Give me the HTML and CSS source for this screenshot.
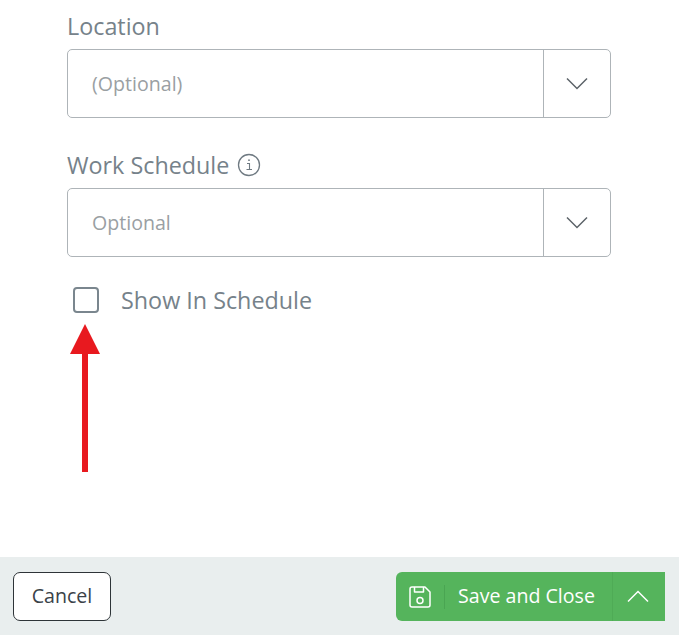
FILE: index.html
```html
<!DOCTYPE html>
<html lang="en">
  <head>
    <meta charset="UTF-8" />
    <meta name="viewport" content="width=device-width, initial-scale=1.0" />
    <title>Show In Schedule</title>
    <link rel="stylesheet" href="styles.css">
  </head>
  <body>
    <div class="form">
      <div class="field">
        <div class="field-label">Location</div>
        <div class="select">
          <div class="select-value">(Optional)</div>
          <div class="select-toggle">
            <svg width="22" height="13" viewBox="0 0 22 13"><path d="M1 1.5l10 10 10-10" fill="none" stroke="#5c6368" stroke-width="1.5"/></svg>
          </div>
        </div>
      </div>

      <div class="field field-schedule">
        <div class="field-label">
          Work Schedule
          <svg class="info-icon" width="24" height="24" viewBox="0 0 24 24">
            <circle cx="12" cy="12" r="10.5" fill="none" stroke="#6f7a82" stroke-width="1.3"/>
            <path d="M10 10.5h2.5v6M9.5 16.5h5.5" fill="none" stroke="#6f7a82" stroke-width="1.1"/>
            <circle cx="12" cy="7.2" r="0.9" fill="#6f7a82"/>
          </svg>
        </div>
        <div class="select">
          <div class="select-value">Optional</div>
          <div class="select-toggle">
            <svg width="22" height="13" viewBox="0 0 22 13"><path d="M1 1.5l10 10 10-10" fill="none" stroke="#5c6368" stroke-width="1.5"/></svg>
          </div>
        </div>
      </div>

      <label class="check-row">
        <span class="checkbox"></span>
        <span class="check-label">Show In Schedule</span>
      </label>
    </div>

    <!-- red annotation arrow -->
    <svg class="arrow" width="30" height="148" viewBox="0 0 30 148">
      <path d="M15 0L30 30H18V148H12V30H0z" fill="#e8191f"/>
    </svg>

    <div class="footer">
      <button class="btn-cancel">Cancel</button>
      <div class="btn-save">
        <span class="save-icon">
          <svg width="22" height="22" viewBox="0 0 22 22" fill="none" stroke="#fff" stroke-width="1.5" stroke-linejoin="round">
            <path d="M3 1h13l5 5v13a2 2 0 0 1-2 2H3a2 2 0 0 1-2-2V3a2 2 0 0 1 2-2z"/>
            <path d="M5.5 1v5h9V1"/>
            <circle cx="11" cy="14.5" r="3"/>
          </svg>
        </span>
        <span class="save-text">Save and Close</span>
        <span class="save-toggle">
          <svg width="22" height="13" viewBox="0 0 22 13"><path d="M1 11.5l10-10 10 10" fill="none" stroke="#fff" stroke-width="1.5"/></svg>
        </span>
      </div>
    </div>
  </body>
</html>
```

FILE: styles.css
```css
html,
body {
  height: 100%;
}
body {
  font-family: "Open Sans", sans-serif;
  margin: 0;
  position: relative;
  height: 635px;
  overflow: hidden;
  display: flex;
  flex-direction: column;
  background-color: #fff;
}
.form {
  flex: 1;
  padding: 10px 68px 0 67px;
}
.field-label {
  display: flex;
  align-items: center;
  gap: 8px;
  height: 32px;
  margin-bottom: 7px;
  font-size: 23.33px;
  color: #76828a;
}
.field-schedule {
  margin-top: 31px;
}
.select {
  display: flex;
  height: 69px;
  box-sizing: border-box;
  border: 1px solid #aeb4b8;
  border-radius: 5px;
}
.select-value {
  flex: 1;
  display: flex;
  align-items: center;
  padding-left: 24px;
  font-size: 19.6px;
  color: #9a9fa3;
}
.select-toggle {
  width: 66px;
  display: flex;
  align-items: center;
  justify-content: center;
  border-left: 1px solid #aeb4b8;
}
.check-row {
  display: flex;
  align-items: center;
  margin: 27px 0 0 6px;
}
.checkbox {
  width: 26px;
  height: 26px;
  box-sizing: border-box;
  border: 2px solid #7a868e;
  border-radius: 4px;
}
.check-label {
  margin-left: 22px;
  font-size: 23.33px;
  color: #76828a;
}
.arrow {
  position: absolute;
  left: 70px;
  top: 324px;
}
.footer {
  height: 78px;
  box-sizing: border-box;
  padding: 15px 14px 14px 13px;
  display: flex;
  justify-content: space-between;
  background-color: #e9eeee;
}
.btn-cancel {
  width: 98px;
  height: 49px;
  border: 1px solid #2e3438;
  border-radius: 7px;
  background-color: #fff;
  font-family: inherit;
  font-size: 19.6px;
  color: #3a4248;
  padding: 0 0 2px;
}
.btn-save {
  width: 269px;
  height: 49px;
  display: flex;
  align-items: center;
  border-radius: 6px 0 0 6px;
  background-color: #55b45c;
  color: #fff;
  font-size: 19.6px;
}
.save-icon {
  width: 49px;
  height: 24px;
  box-sizing: border-box;
  display: flex;
  align-items: center;
  justify-content: center;
  border-right: 1px solid #4aa552;
}
.save-text {
  flex: 1;
  padding: 0 0 2px 13px;
}
.save-toggle {
  width: 53px;
  height: 49px;
  box-sizing: border-box;
  display: flex;
  align-items: center;
  justify-content: center;
  padding-right: 2px;
  border-left: 1px solid #4fab56;
}
```
